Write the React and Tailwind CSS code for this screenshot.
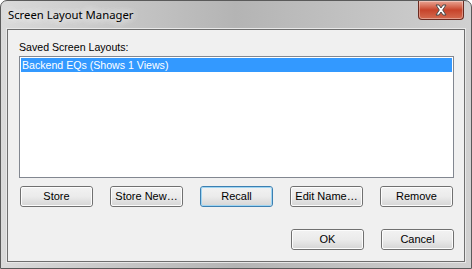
const buttons = ["Store", "Store New...", "Recall", "Edit Name...", "Remove"];

function WinButton({ label, isDefault }) {
  return (
    <button
      className={`relative h-[21px] w-[73px] rounded-[3px] border ${isDefault ? "border-[#3c7fb1]" : "border-[#707070]"} bg-gradient-to-b from-[#f2f2f2] via-[#ebebeb] to-[#d5d5d5] text-[11px] leading-none text-black`}
      style={{ fontFamily: '"Liberation Sans", Arial, sans-serif' }}
    >
      <span
        className={`absolute inset-0 rounded-[2px] border ${isDefault ? "border-[#9fd5f2]" : "border-[#fcfcfc]"}`}
      />
      <span className="relative">{label.replace("...", "\u2026")}</span>
    </button>
  );
}

export default function App() {
  return (
    <div className="h-[269px] w-[472px] bg-white">
      <div className="relative flex h-[269px] w-[472px] flex-col rounded-t-[7px] border border-[#5a5a5a] bg-gradient-to-r from-[#dadada] via-[#b4b4b4] to-[#d0d0d0]">
        {/* Title bar */}
        <div className="flex h-[28px] items-start justify-between">
          <div
            className="pl-[7px] pt-[6px] text-[11.3px] text-black"
            style={{ fontFamily: '"Noto Sans", "Open Sans", sans-serif', textShadow: "0 0 8px #f4f4f4, 0 0 8px #f4f4f4" }}
          >
            Screen Layout Manager
          </div>
          <div className="mr-[7px] flex h-[19px] w-[46px] items-center justify-center rounded-b-[4px] border border-t-0 border-[#6b2a20] bg-gradient-to-b from-[#e8a493] via-[#c7432a] to-[#d46a4f] shadow-[inset_0_0_0_1px_rgba(255,255,255,0.35)]">
            <svg width="14" height="12" viewBox="0 0 14 12">
              <path
                d="M2 1 L5 1 L7 4 L9 1 L12 1 L8.7 6 L12 11 L9 11 L7 8 L5 11 L2 11 L5.3 6 Z"
                fill="#ffffff"
                stroke="#4a4a4a"
                strokeWidth="1"
                strokeLinejoin="round"
              />
            </svg>
          </div>
        </div>

        {/* Client area */}
        <div className="mx-[6px] mb-[6px] flex flex-1 flex-col border border-[#6e6e6e] bg-[#f0f0f0] pl-[11px] pr-[10px] shadow-[0_0_0_1px_#e8e8e8]">
          <div
            className="pt-[10px] text-[10.6px] leading-[15px] text-black"
            style={{ fontFamily: '"Liberation Sans", Arial, sans-serif' }}
          >
            Saved Screen Layouts:
          </div>
          <div className="mt-[1px] h-[122px] w-[435px] border border-[#828790] bg-white p-[1px]">
            <div
              className="h-[14px] bg-[#3399ff] pl-[1px] text-[10.6px] leading-[14px] text-white"
              style={{ fontFamily: '"Liberation Sans", Arial, sans-serif' }}
            >
              Backend EQs (Shows 1 Views)
            </div>
          </div>

          <div className="mt-[8px] flex gap-[17px] pl-[1px]">
            {buttons.map((b) => (
              <WinButton key={b} label={b} isDefault={b === "Recall"} />
            ))}
          </div>

          <div className="mt-[22px] flex justify-end gap-[17px]">
            <WinButton label="OK" />
            <WinButton label="Cancel" />
          </div>
        </div>
      </div>
    </div>
  );
}
